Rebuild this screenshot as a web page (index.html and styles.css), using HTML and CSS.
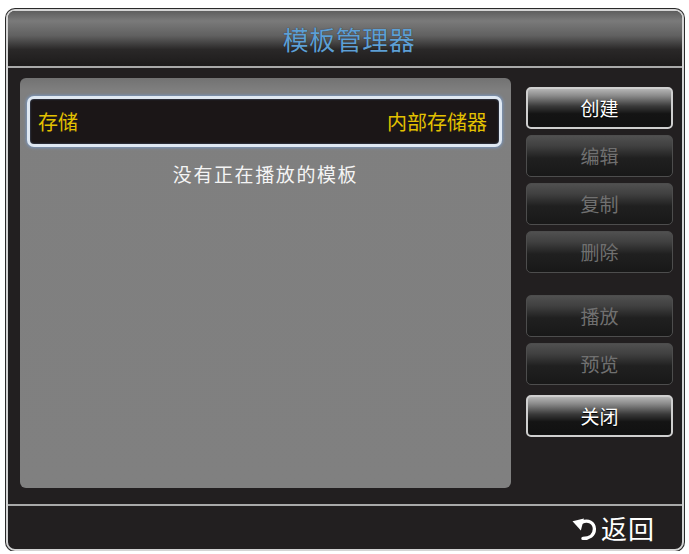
FILE: index.html
```html
<!DOCTYPE html>
<html lang="zh-CN">
<head>
<meta charset="utf-8">
<title>模板管理器</title>
<link rel="stylesheet" href="styles.css">
</head>
<body>
<div class="frame">
  <div class="header">模板管理器</div>
  <div class="main">
    <div class="panel">
      <div class="storage">
        <span>存储</span>
        <span>内部存储器</span>
      </div>
      <div class="empty">没有正在播放的模板</div>
    </div>
    <div class="buttons">
      <div class="btn active">创建</div>
      <div class="btn disabled">编辑</div>
      <div class="btn disabled">复制</div>
      <div class="btn disabled">删除</div>
      <div class="btn disabled group2">播放</div>
      <div class="btn disabled">预览</div>
      <div class="btn active close">关闭</div>
    </div>
  </div>
  <div class="footer">
    <svg class="back-icon" viewBox="0 0 24 24" width="25" height="25" aria-hidden="true">
      <path d="M9.5 6 C15.5 3 21.5 6.5 21.5 12.5 C21.5 18.5 16.5 21.5 10.5 21.5" fill="none" stroke="#fff" stroke-width="3.2" stroke-linecap="round"/>
      <polygon points="0.5,5 11.5,2.5 8.5,14" fill="#fff"/>
    </svg>
    <span class="back-text">返回</span>
  </div>
</div>
</body>
</html>
```

FILE: styles.css
```css
html, body {
  margin: 0;
  padding: 0;
  background: #ffffff;
}

body {
  font-family: "Noto Sans CJK SC", "Noto Sans", sans-serif;
}

.frame {
  margin: 9px 0 0 6px;
  width: 678px;
  height: 542px;
  box-sizing: border-box;
  border: 2px solid #d4d4d4;
  border-radius: 9px;
  box-shadow: 0 0 0 1px #2a2a2a;
  background: #221f20;
  overflow: hidden;
  display: flex;
  flex-direction: column;
}

.header {
  height: 55px;
  flex: none;
  padding-left: 8px;
  border-bottom: 2px solid #a9a9a9;
  background: linear-gradient(to bottom, #5e5e5e 0%, #7a7a7a 18%, #606060 45%, #2a2828 70%, #1d1b1b 100%);
  color: #5e9fd4;
  font-size: 26px;
  line-height: 55px;
  text-align: center;
  letter-spacing: 0.5px;
  text-shadow: 0 0 1px rgba(0, 0, 0, 0.6);
}

.main {
  height: 436px;
  flex: none;
  display: flex;
  padding: 10px 0 0 12px;
  box-sizing: border-box;
}

.panel {
  width: 491px;
  height: 410px;
  flex: none;
  border-radius: 6px;
  background: linear-gradient(to bottom, #727272 0%, #7f7f7f 3%, #808080 100%);
  display: flex;
  flex-direction: column;
}

.storage {
  margin: 18px 9px 0 7px;
  height: 51px;
  box-sizing: border-box;
  border: 3px solid #dfe8f2;
  border-radius: 7px;
  box-shadow: 0 0 3px 1px rgba(120, 160, 215, 0.7), inset 0 0 2px rgba(120, 160, 215, 0.6);
  background: #1b1617;
  display: flex;
  justify-content: space-between;
  align-items: center;
  padding: 0 12px 0 8px;
  color: #e3c100;
  font-size: 20px;
}

.empty {
  margin-top: 15px;
  text-align: center;
  color: #f4f4f4;
  font-size: 19px;
  line-height: 24px;
  letter-spacing: 1.6px;
}

.buttons {
  margin: 9px 0 0 15px;
  width: 147px;
  display: flex;
  flex-direction: column;
  gap: 6px;
}

.btn {
  height: 42px;
  box-sizing: border-box;
  border-radius: 5px;
  font-size: 19px;
  line-height: 40px;
  text-align: center;
}

.btn.active {
  border: 2px solid #cfcfcf;
  background: linear-gradient(to bottom, #b5b5b5 0%, #8a8a8a 18%, #3a3a3a 45%, #141414 65%, #111111 100%);
  color: #ffffff;
  line-height: 38px;
  text-shadow: 0 1px 1px #000;
}

.btn.disabled {
  border: 1px solid #4d4d4d;
  background: linear-gradient(to bottom, #505050 0%, #404040 25%, #202020 55%, #181818 100%);
  color: #707070;
}

.btn.group2 {
  margin-top: 16px;
}

.btn.close {
  margin-top: 4px;
}

.footer {
  flex: 1;
  border-top: 2px solid #a9a9a9;
  display: flex;
  justify-content: flex-end;
  align-items: center;
  padding-right: 27px;
  color: #ffffff;
}

.back-icon {
  margin-right: 4px;
  margin-top: 2px;
}

.back-text {
  font-size: 26px;
  line-height: 40px;
  letter-spacing: 1px;
}
```
